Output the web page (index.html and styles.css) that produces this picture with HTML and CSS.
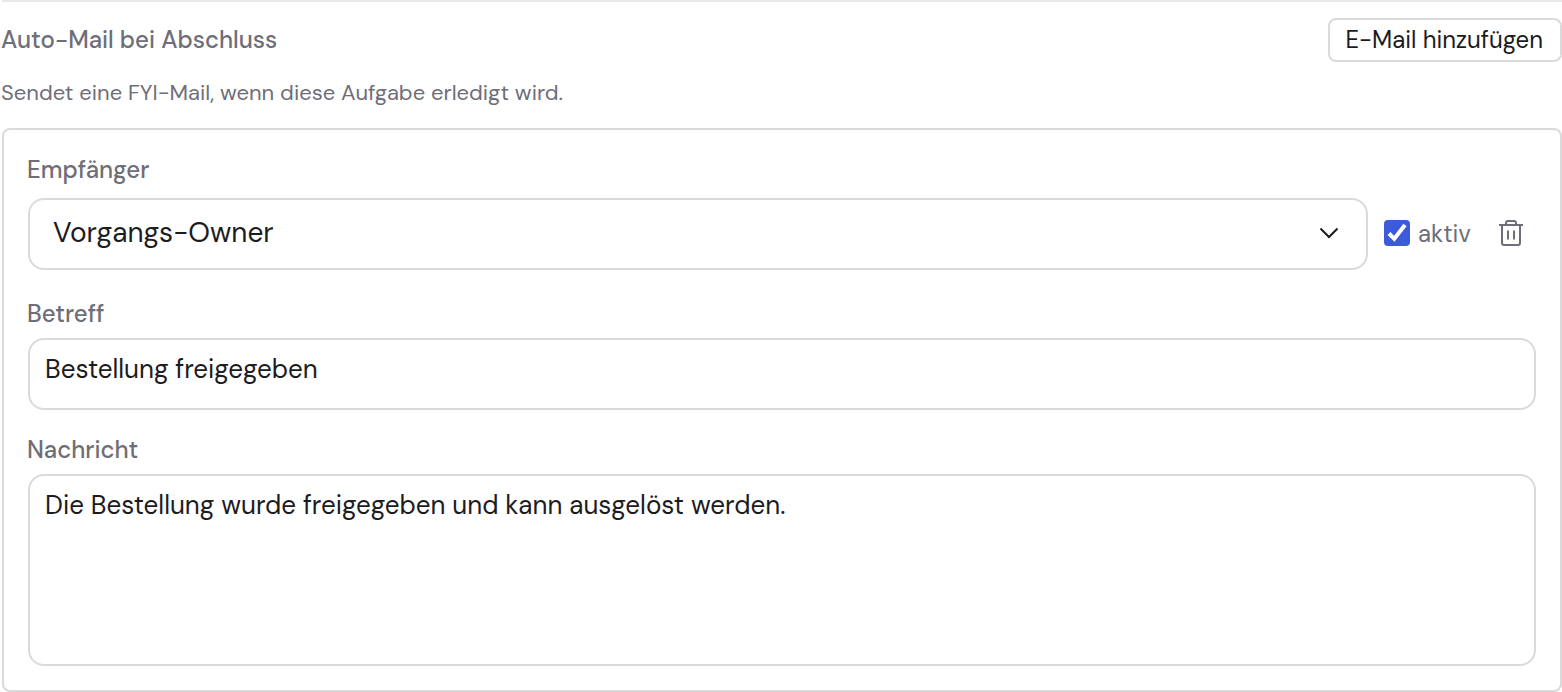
FILE: index.html
```html
<!DOCTYPE html>
<html lang="de">
<head>
<meta charset="utf-8">
<meta name="viewport" content="width=device-width, initial-scale=1">
<title>Auto-Mail bei Abschluss</title>
<link rel="stylesheet" href="styles.css">
</head>
<body>
<section class="auto-mail">
  <header class="head">
    <h2 class="title">Auto-Mail bei Abschluss</h2>
    <button type="button" class="add">E-Mail hinzufügen</button>
  </header>
  <p class="hint">Sendet eine FYI-Mail, wenn diese Aufgabe erledigt wird.</p>
  <form class="card">
    <div class="recipient">
      <label class="label" for="recipient">Empfänger</label>
      <div class="row">
        <div class="select-wrap">
          <select id="recipient" class="select"><option>Vorgangs-Owner</option></select>
          <svg class="chevron" viewBox="0 0 20 12" aria-hidden="true"><path d="M1.500 1.500 10 10l8.500-8.500"/></svg>
        </div>
        <label class="active">
          <span class="check-wrap">
            <input type="checkbox" class="check" checked>
            <svg class="tick" viewBox="0 0 26 26" aria-hidden="true"><path d="M5 13.500 10.300 18.800 21 5"/></svg>
          </span>
          aktiv
        </label>
        <button type="button" class="delete" aria-label="Löschen">
          <svg class="trash" viewBox="0 0 24 26" aria-hidden="true"><path d="M0 5h24M7 5V3q0-2 2-2h6q2 0 2 2v2M3 5v18q0 2 2 2h14q2 0 2-2V5M9 10.500v9M15 10.500v9"/></svg>
        </button>
      </div>
    </div>
    <div class="field">
      <label class="label" for="subject">Betreff</label>
      <input id="subject" class="input" type="text" value="Bestellung freigegeben">
    </div>
    <div class="field">
      <label class="label" for="message">Nachricht</label>
      <textarea id="message" class="input message">Die Bestellung wurde freigegeben und kann ausgelöst werden.</textarea>
    </div>
  </form>
</section>
</body>
</html>
```

FILE: styles.css
```css
* { box-sizing: border-box; }
body {
  margin: 0;
  background: #fff;
  color: #1c1c1e;
  font-family: "DM Sans", "Open Sans", sans-serif;
}
button, input, select, textarea { font-family: inherit; color: inherit; }
.auto-mail { margin-left: 2px; border-top: 2px solid #e9e9e9; padding-top: 16px; }
.head { display: flex; align-items: center; justify-content: space-between; }
.title { margin: 0 0 0 -1px; font-size: 24px; line-height: 32px; font-weight: 500; color: #6e6e78; }
.add {
  height: 44px;
  padding: 0 17px 0 15px;
  border: 2px solid #dadada;
  border-radius: 8px;
  background: #fff;
  font-size: 24px;
  line-height: 32px;
}
.hint { margin: 15px 0 19px -1px; font-size: 22px; line-height: 32px; color: #6e6e78; }
.card {
  display: flex;
  flex-direction: column;
  gap: 24px;
  padding: 24px;
  border: 2px solid #dadada;
  border-radius: 8px;
}
.recipient { display: flex; flex-direction: column; gap: 12px; padding-bottom: 4px; }
.field { display: flex; flex-direction: column; gap: 8px; }
.label { margin-left: -1px; font-size: 24px; line-height: 32px; font-weight: 500; color: #6e6e78; }
.row { display: flex; align-items: center; }
.select-wrap { position: relative; flex: 1; }
.select {
  display: block;
  width: 100%;
  height: 72px;
  padding: 0 64px 4px 23px;
  border: 2px solid #dadada;
  border-radius: 16px;
  background: #fff;
  font-size: 28px;
  appearance: none;
}
.chevron {
  position: absolute;
  top: 29px;
  right: 29px;
  width: 20px;
  height: 12px;
  fill: none;
  stroke: #1c1c1e;
  stroke-width: 2;
  pointer-events: none;
}
.active { display: flex; align-items: center; gap: 8px; margin-left: 16px; font-size: 24px; line-height: 32px; color: #6e6e78; }
.check-wrap { position: relative; display: flex; padding-bottom: 2px; }
.check { width: 26px; height: 26px; margin: 0; border: 2px solid #9a9aa2; border-radius: 4px; background: #fff; appearance: none; }
.check:checked { border-color: #3b5bdb; background: #3b5bdb; }
.tick { position: absolute; top: 0; left: 0; width: 26px; height: 26px; fill: none; stroke: #fff; stroke-width: 4; pointer-events: none; }
.check:not(:checked) + .tick { display: none; }
.delete { display: flex; margin-left: 16px; padding: 12px 13px 14px 12px; border: 0; background: none; color: #6e6e78; }
.trash { width: 24px; height: 26px; fill: none; stroke: currentColor; stroke-width: 2; }
.input {
  display: block;
  width: 100%;
  height: 72px;
  padding: 10px 16px 20px 15px;
  border: 2px solid #dadada;
  border-radius: 16px;
  background: #fff;
  font-size: 26px;
  line-height: 38px;
}
.message { height: 192px; resize: none; }
```
